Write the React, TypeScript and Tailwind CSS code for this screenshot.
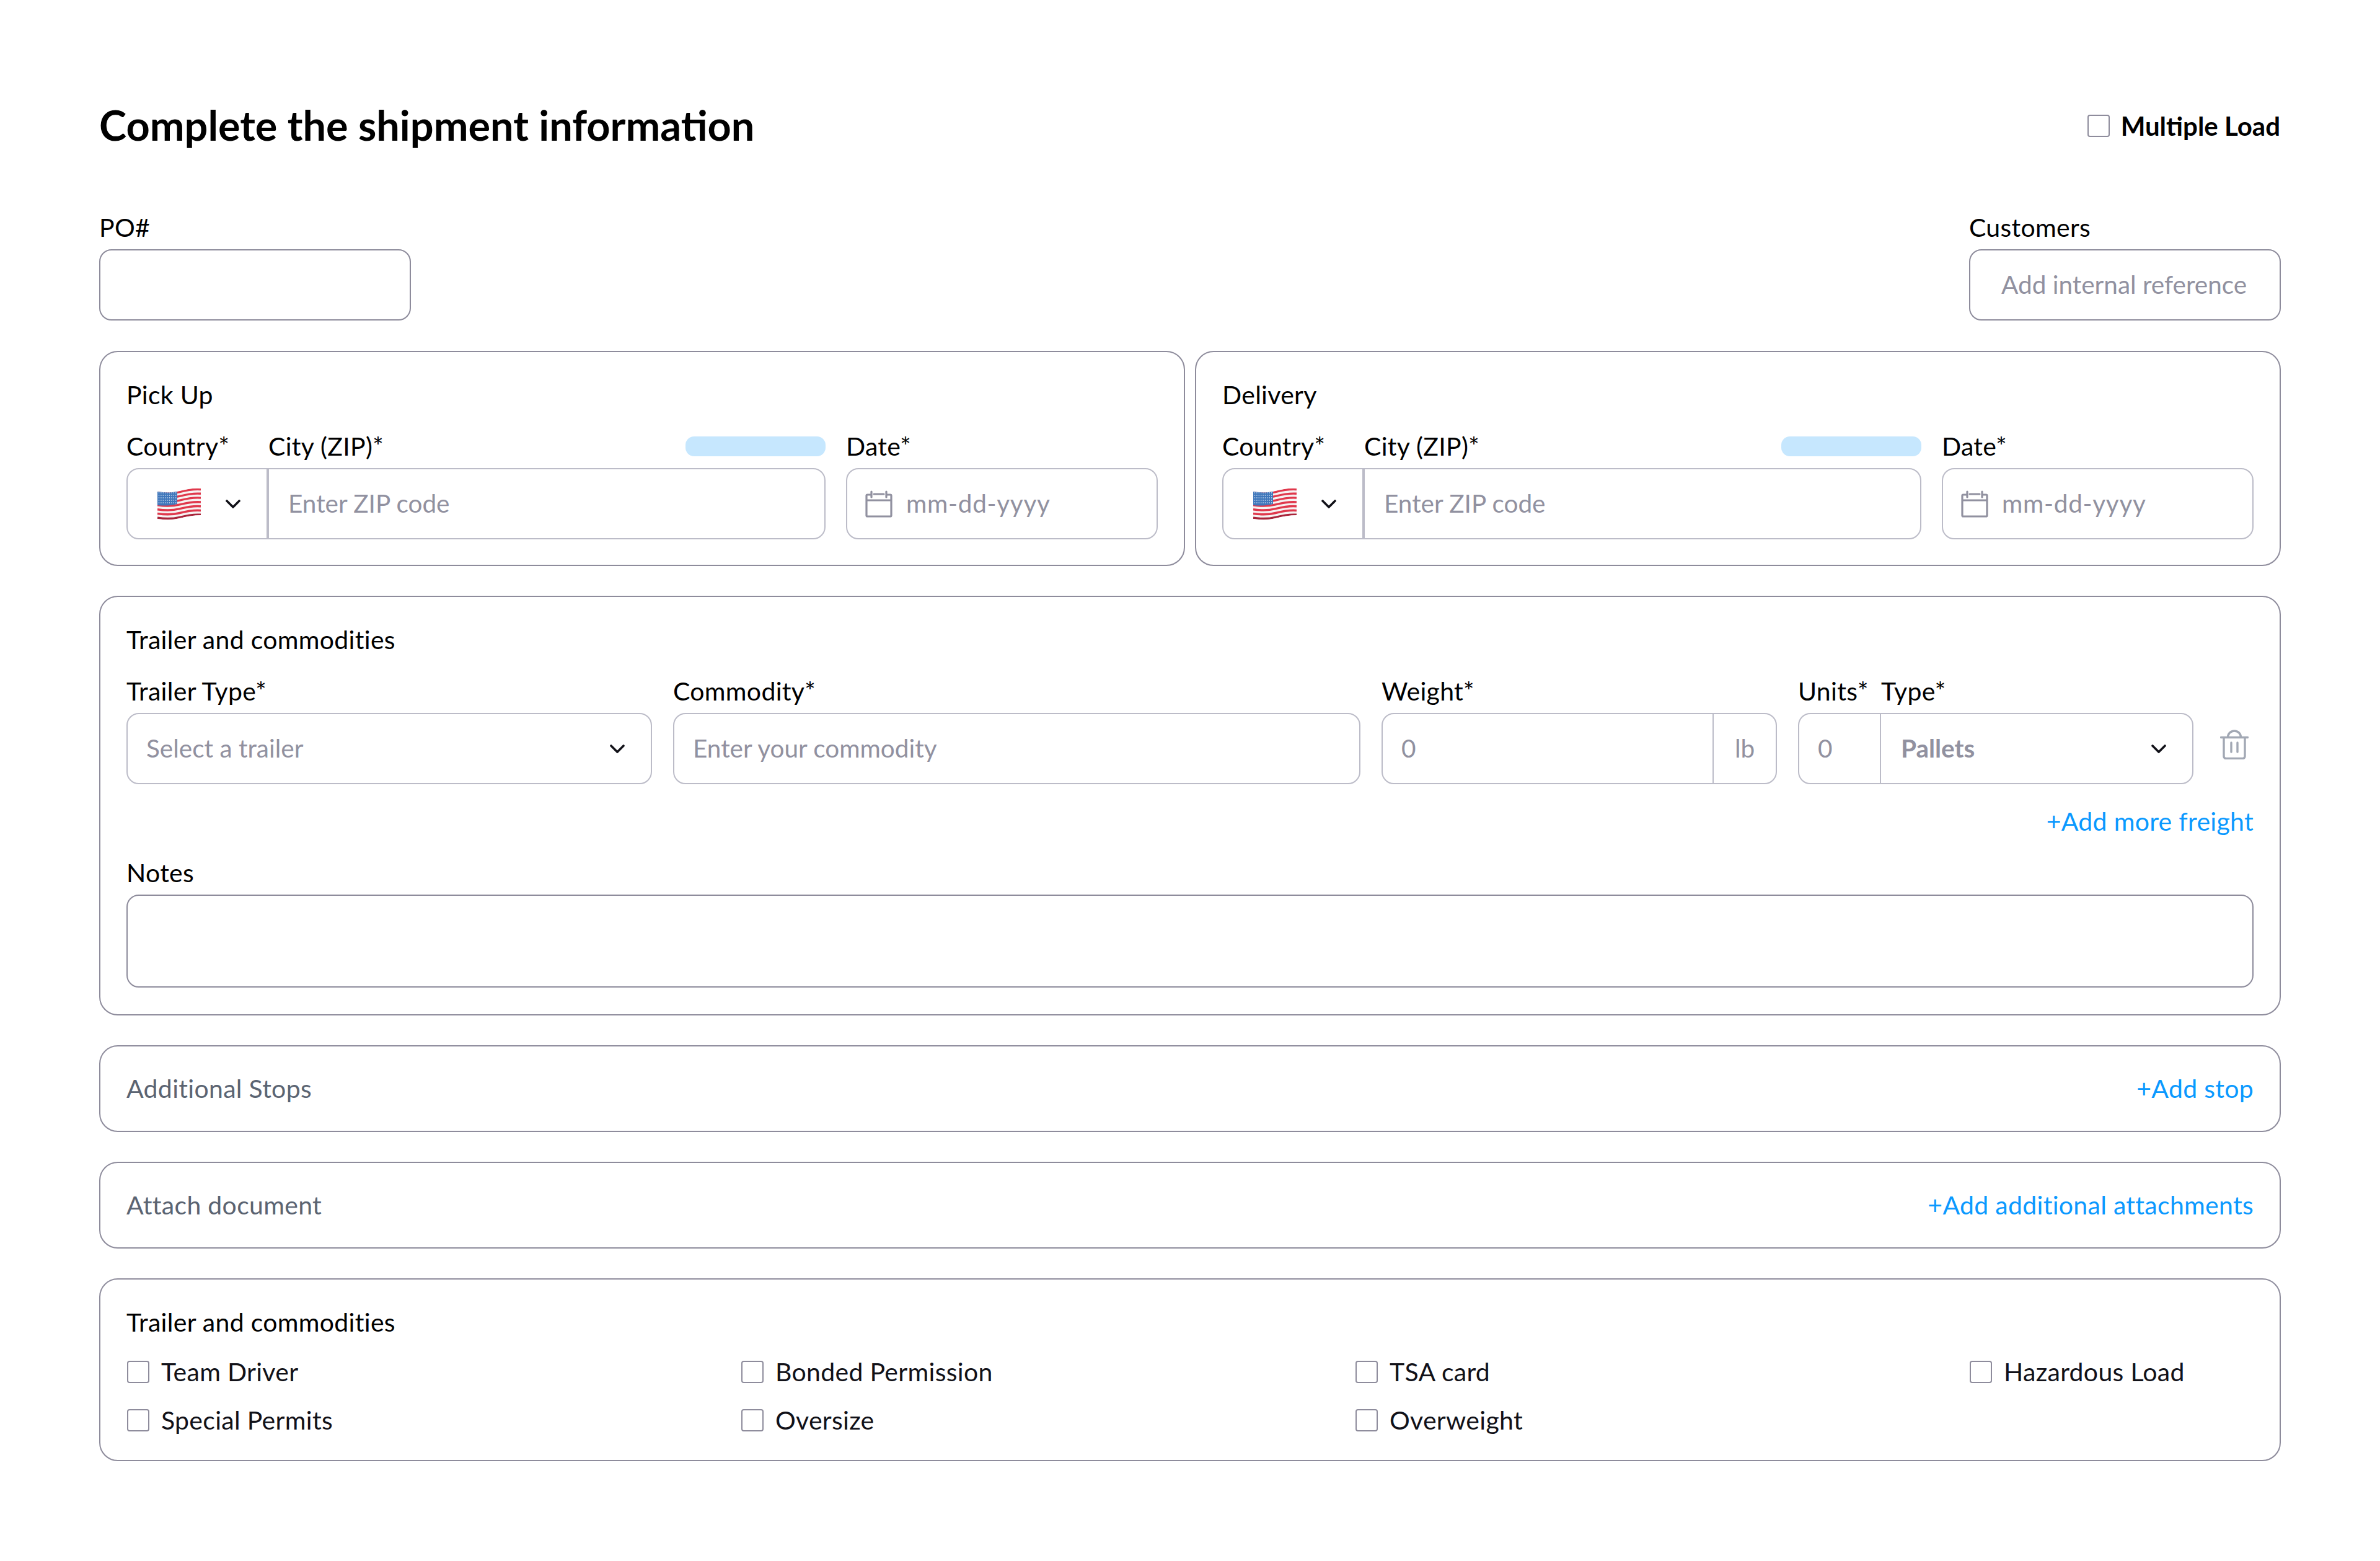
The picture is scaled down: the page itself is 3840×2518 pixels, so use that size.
import React from "react";

const Chevron = ({ className = "" }: { className?: string }) => (
  <svg viewBox="0 0 24 14" fill="none" className={`w-[24px] h-[14px] shrink-0 ${className}`}>
    <path d="M2 2l10 10L22 2" stroke="#111118" strokeWidth="3.6" strokeLinecap="round" strokeLinejoin="round" />
  </svg>
);

const Flag = () => {
  const stripes = Array.from({ length: 13 }, (_, i) => i);
  const stars = Array.from({ length: 45 }, (_, i) => i);
  return (
    <svg viewBox="0 0 70 52" className="w-[70px] h-[52px] shrink-0">
      <defs>
        <clipPath id="wave">
          <path d="M0 6C14 8 24 8 36 5S58 0 70 1V44C58 44 48 46 36 49S14 52 0 50Z" />
        </clipPath>
      </defs>
      <g clipPath="url(#wave)">
        <rect width="70" height="52" fill="#f6f2f2" />
        {stripes.map((i) =>
          i % 2 === 0 ? (
            <path
              key={i}
              d={`M0 ${7.5 + i * 3.4}C14 ${9.5 + i * 3.4} 24 ${9.5 + i * 3.4} 36 ${6.5 + i * 3.4}S58 ${1.5 + i * 3.4} 70 ${2.5 + i * 3.4}`}
              stroke={i === 12 ? "#a8243a" : "#e0384c"}
              strokeWidth="3.4"
              fill="none"
            />
          ) : null
        )}
        <path d="M0 5H32V26C20 29 10 29 0 28Z" fill="#3f77bb" />
        {stars.map((i) => (
          <circle key={i} cx={2.5 + (i % 9) * 3.4} cy={8 + Math.floor(i / 9) * 4} r="0.8" fill="#eef3fb" />
        ))}
      </g>
    </svg>
  );
};

const Calendar = () => (
  <svg viewBox="0 0 44 44" fill="none" className="w-[44px] h-[44px] shrink-0">
    <path
      d="M10 7H3.500C2.500 7 2 7.500 2 8.500V40.500C2 41.500 2.500 42 3.500 42H40.500C41.500 42 42 41.500 42 40.500V8.500C42 7.500 41.500 7 40.500 7H34M10 2V11M34 2V11M14 6H30M2 16H42"
      stroke="#9191a0"
      strokeWidth="3.2"
      strokeLinecap="round"
      strokeLinejoin="round"
    />
  </svg>
);

const Trash = () => (
  <svg viewBox="0 0 46 48" fill="none" className="w-[46px] h-[48px] shrink-0">
    <path
      d="M1.500 12.500H44.500M6 12.500V43C6 45 7.500 46.500 9.500 46.500H36.500C38.500 46.500 40 45 40 43V12.500M12.500 12.500C12.500 6.500 17 2 23 2S33.500 6.500 33.500 12.500M18 21V36M28 21V36"
      stroke="#a2a8b4"
      strokeWidth="3.4"
      strokeLinecap="round"
      strokeLinejoin="round"
    />
  </svg>
);

const Box = ({ className = "" }: { className?: string }) => (
  <span className={`block w-[36px] h-[36px] shrink-0 rounded-[4px] border-2 border-[#8e8c9c] ${className}`} />
);

const Label = ({ children, className = "" }: { children: React.ReactNode; className?: string }) => (
  <div className={`h-[50px] leading-[50px] text-[41px] tracking-[0.3px] text-black whitespace-nowrap ${className}`}>{children}</div>
);

const Card = ({ children, className = "" }: { children: React.ReactNode; className?: string }) => (
  <div className={`rounded-[30px] border-2 border-[#8e8c9c] bg-white ${className}`}>{children}</div>
);

const Placeholder = ({ children, className = "" }: { children: React.ReactNode; className?: string }) => (
  <span className={`text-[40.5px] text-[#9191a0] whitespace-nowrap ${className}`}>{children}</span>
);

const Location = ({ title }: { title: string }) => (
  <Card className="flex-1 px-[42px] pt-[44px] pb-[41px]">
    <Label>{title}</Label>
    <div className="mt-[33px] flex gap-[33px]">
      <div className="flex-1">
        <div className="flex items-center mb-[10px]">
          <Label className="w-[229px]">Country*</Label>
          <Label>City (ZIP)*</Label>
          <div className="ml-auto w-[226px] h-[32px] rounded-[14px] bg-[#c6e7fe]" />
        </div>
        <div className="flex h-[115px] rounded-[20px] border-2 border-[#bcbcc8]">
          <div className="w-[228px] flex items-center pl-[48px] border-r-4 border-[#bcbcc8]">
            <Flag />
            <Chevron className="ml-[40px]" />
          </div>
          <div className="flex-1 flex items-center pl-[31px]">
            <Placeholder>Enter ZIP code</Placeholder>
          </div>
        </div>
      </div>
      <div className="w-[503px]">
        <Label className="mb-[10px]">Date*</Label>
        <div className="flex items-center h-[115px] rounded-[20px] border-2 border-[#bcbcc8] pl-[29px]">
          <Calendar />
          <Placeholder className="ml-[22px] tracking-[0.7px]">mm-dd-yyyy</Placeholder>
        </div>
      </div>
    </div>
  </Card>
);

const LinkRow = ({ title, link }: { title: string; link: string }) => (
  <Card className="mt-[48px] h-[140px] flex items-center justify-between px-[42px]">
    <span className="text-[41px] tracking-[0.3px] text-[#5b6472]">{title}</span>
    <span className="text-[41px] tracking-[0.3px] text-[#0a99ff]">{link}</span>
  </Card>
);

const Check = ({ text }: { text: string }) => (
  <div className="flex items-center h-[50px]">
    <Box className="ml-px" />
    <span className="ml-[19px] text-[41px] tracking-[0.3px] text-[#111118] whitespace-nowrap">{text}</span>
  </div>
);

export default function App() {
  return (
    <div className="min-h-[2518px] bg-white px-[160px] pt-[160px] pb-[161px] font-['Lato',sans-serif]">
      <div className="flex items-center justify-between h-[86px] mb-[96px]">
        <h1 className="text-[66.7px] font-bold text-black leading-none mb-[3px]">Complete the shipment information</h1>
        <div className="flex items-center mr-[1px]">
          <Box />
          <span className="ml-[18px] text-[42px] font-bold text-black">Multiple Load</span>
        </div>
      </div>

      <div className="flex justify-between">
        <div className="w-[503px]">
          <Label className="mb-[10px]">PO#</Label>
          <div className="h-[115px] rounded-[20px] border-2 border-[#8e8c9c]" />
        </div>
        <div className="w-[503px]">
          <Label className="mb-[10px]">Customers</Label>
          <div className="h-[115px] rounded-[20px] border-2 border-[#8e8c9c] flex items-center pl-[50px]">
            <Placeholder>Add internal reference</Placeholder>
          </div>
        </div>
      </div>

      <div className="mt-[49px] flex gap-[16px]">
        <Location title="Pick Up" />
        <Location title="Delivery" />
      </div>

      <Card className="mt-[48px] px-[42px] pt-[44px] pb-[43px]">
        <Label>Trailer and commodities</Label>
        <div className="mt-[33px] flex gap-[34px]">
          <div className="w-[848px]">
            <Label className="mb-[10px]">Trailer Type*</Label>
            <div className="flex items-center justify-between h-[115px] rounded-[20px] border-2 border-[#bcbcc8] pl-[30px] pr-[42px]">
              <Placeholder>Select a trailer</Placeholder>
              <Chevron />
            </div>
          </div>
          <div className="flex-1">
            <Label className="mb-[10px]">Commodity*</Label>
            <div className="flex items-center h-[115px] rounded-[20px] border-2 border-[#bcbcc8] pl-[30px]">
              <Placeholder>Enter your commodity</Placeholder>
            </div>
          </div>
          <div className="w-[638px]">
            <Label className="mb-[10px]">Weight*</Label>
            <div className="flex h-[115px] rounded-[20px] border-2 border-[#bcbcc8]">
              <div className="flex-1 flex items-center pl-[30px] border-r-2 border-[#bcbcc8]">
                <Placeholder>0</Placeholder>
              </div>
              <div className="w-[100px] flex items-center justify-center">
                <Placeholder>lb</Placeholder>
              </div>
            </div>
          </div>
          <div className="w-[638px]">
            <div className="flex mb-[10px]">
              <Label className="w-[134px]">Units*</Label>
              <Label>Type*</Label>
            </div>
            <div className="flex h-[115px] rounded-[20px] border-2 border-[#bcbcc8]">
              <div className="w-[132px] flex items-center pl-[30px] border-r-2 border-[#bcbcc8]">
                <Placeholder>0</Placeholder>
              </div>
              <div className="flex-1 flex items-center justify-between pl-[32px] pr-[42px]">
                <Placeholder className="font-bold">Pallets</Placeholder>
                <Chevron />
              </div>
            </div>
          </div>
          <div className="w-[63px] flex flex-col justify-end">
            <div className="h-[115px] flex items-center pl-[9px] pb-[14px]">
              <Trash />
            </div>
          </div>
        </div>
        <div className="mt-[35px] h-[50px] leading-[50px] text-right text-[41px] tracking-[0.3px] text-[#0a99ff]">+Add more freight</div>
        <Label className="mt-[33px] mb-[10px]">Notes</Label>
        <div className="h-[150px] rounded-[20px] border-2 border-[#8e8c9c]" />
      </Card>

      <LinkRow title="Additional Stops" link="+Add stop" />
      <LinkRow title="Attach document" link="+Add additional attachments" />

      <Card className="mt-[48px] px-[42px] pt-[44px] pb-[39px]">
        <Label>Trailer and commodities</Label>
        <div className="mt-[30px] grid grid-cols-[991px_991px_991px_1fr] gap-y-[28px]">
          <Check text="Team Driver" />
          <Check text="Bonded Permission" />
          <Check text="TSA card" />
          <Check text="Hazardous Load" />
          <Check text="Special Permits" />
          <Check text="Oversize" />
          <Check text="Overweight" />
        </div>
      </Card>
    </div>
  );
}
